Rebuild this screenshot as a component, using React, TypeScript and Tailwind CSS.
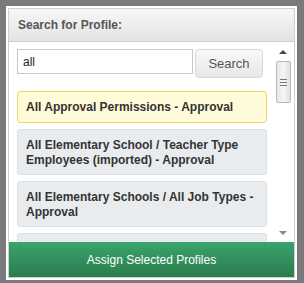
const items = [
  { label: "All Approval Permissions - Approval", selected: true },
  { label: "All Elementary School / Teacher Type Employees (imported) - Approval", selected: false },
  { label: "All Elementary Schools / All Job Types - Approval", selected: false },
];

export default function App() {
  return (
    <div className="w-[304px] h-[283px] bg-[#7a7a7a] pt-[6px] pl-[6px] pr-[7px] pb-[3px] font-['Liberation_Sans',Arial,sans-serif]">
      <div className="w-full h-full bg-white p-[2px]">
        <div className="w-full h-full border border-[#cfcfcf] flex flex-col overflow-hidden">
          <div className="h-[33px] shrink-0 bg-gradient-to-b from-[#f7f7f7] to-[#e3e3e3] border-b border-[#d0d0d0] flex items-center pl-[9px]">
            <span className="text-[12px] font-bold text-[#555]">Search for Profile:</span>
          </div>
          <div className="flex-1 flex min-h-0 bg-white">
            <div className="flex-1 min-w-0 pl-[8px] pr-[8px] pt-[7px] overflow-hidden">
              <div className="flex items-start gap-[2px]">
                <div className="w-[176px] h-[25px] border border-[#c8c8c8] flex items-center pl-[5px] text-[12px] text-[#222]">
                  all
                </div>
                <button className="w-[68px] h-[29px] rounded-[4px] border border-[#d8d8d8] bg-gradient-to-b from-[#f8f8f8] to-[#e8e8e8] text-[13px] text-[#555]">
                  Search
                </button>
              </div>
              <div className="mt-[13px] flex flex-col gap-[6px]">
                {items.map((it, i) => (
                  <div
                    key={i}
                    className={
                      it.selected
                        ? "rounded-[3px] border border-[#f2d66b] bg-[#fffbd8] px-[8px] py-[8px] text-[12px] font-bold text-[#333] leading-[14px]"
                        : "rounded-[3px] border border-[#dde1e5] bg-[#e9ecef] px-[8px] pt-[8px] pb-[6px] text-[12px] font-bold text-[#333] leading-[15px]"
                    }
                  >
                    {it.label}
                  </div>
                ))}
                {/* next row, scrolled out of view behind the footer */}
                <div className="h-[46px] shrink-0 rounded-[3px] border border-[#dde1e5] bg-[#e9ecef]" />
              </div>
            </div>
            <div className="w-[19px] shrink-0 flex flex-col items-center pt-[5px] pr-[3px]">
              <div className="h-[10px] flex items-center">
                <div className="w-0 h-0 border-l-[4px] border-r-[4px] border-b-[4px] border-l-transparent border-r-transparent border-b-[#444]" />
              </div>
              <div className="mt-[4px] w-[15px] h-[42px] rounded-[2px] border border-[#b9b9b9] bg-gradient-to-r from-[#e6e6e6] via-[#f6f6f6] to-[#e0e0e0] flex flex-col items-center justify-center gap-[2px]">
                <div className="w-[7px] h-px bg-[#777]" />
                <div className="w-[7px] h-px bg-[#777]" />
                <div className="w-[7px] h-px bg-[#777]" />
              </div>
              <div className="flex-1" />
              <div className="h-[10px] flex items-center mb-[4px]">
                <div className="w-0 h-0 border-l-[4px] border-r-[4px] border-t-[4px] border-l-transparent border-r-transparent border-t-[#888]" />
              </div>
            </div>
          </div>
          <div className="h-[35px] shrink-0 bg-gradient-to-b from-[#3ba46e] to-[#2a7c4d] flex items-center justify-center">
            <span className="text-[12px] text-white">Assign Selected Profiles</span>
          </div>
        </div>
      </div>
    </div>
  );
}
